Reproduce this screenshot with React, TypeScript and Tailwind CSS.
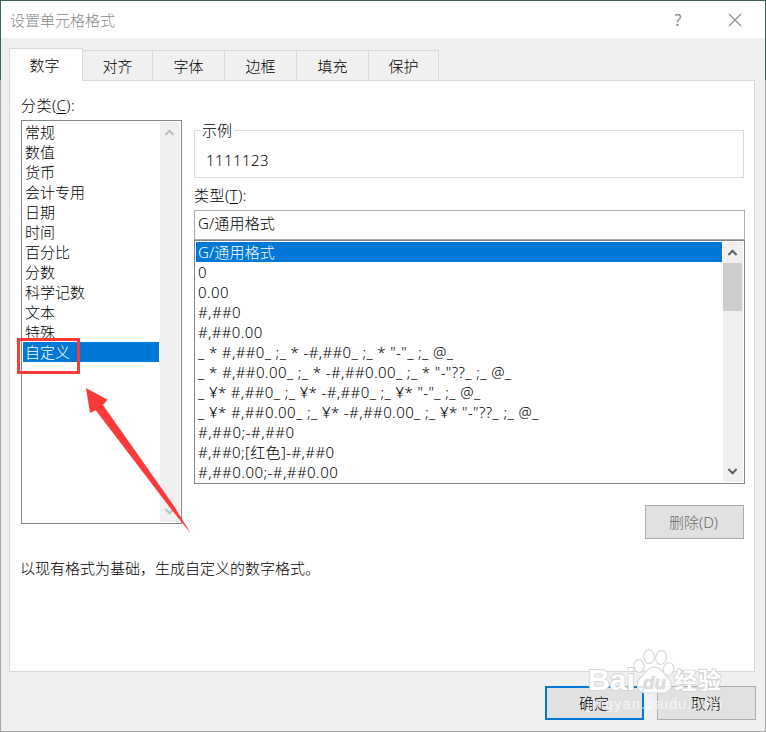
import clsx from "clsx";

const tabs = [
    { label: "数字", box: "w-[74px]" },
    { label: "对齐", box: "w-[70px]" },
    { label: "字体", box: "w-[72px]" },
    { label: "边框", box: "w-[72px]" },
    { label: "填充", box: "w-[72px]" },
    { label: "保护", box: "w-[70px]" },
];

const categories = ["常规", "数值", "货币", "会计专用", "日期", "时间", "百分比", "分数", "科学记数", "文本", "特殊", "自定义"];

const formats = [
    { text: "G/通用格式", tracking: "tracking-[0.15px]" },
    { text: "0", tracking: "tracking-normal" },
    { text: "0.00", tracking: "tracking-[0.4px]" },
    { text: "#,##0", tracking: "tracking-[0.4px]" },
    { text: "#,##0.00", tracking: "tracking-[0.35px]" },
    { text: '_ * #,##0_ ;_ * -#,##0_ ;_ * "-"_ ;_ @_', tracking: "tracking-[0.37px]" },
    { text: '_ * #,##0.00_ ;_ * -#,##0.00_ ;_ * "-"??_ ;_ @_', tracking: "tracking-[0.39px]" },
    { text: '_ ¥* #,##0_ ;_ ¥* -#,##0_ ;_ ¥* "-"_ ;_ @_', tracking: "tracking-[0.38px]" },
    { text: '_ ¥* #,##0.00_ ;_ ¥* -#,##0.00_ ;_ ¥* "-"??_ ;_ @_', tracking: "tracking-[0.4px]" },
    { text: "#,##0;-#,##0", tracking: "tracking-[0.5px]" },
    { text: "#,##0;[红色]-#,##0", tracking: "tracking-[0.39px]" },
    { text: "#,##0.00;-#,##0.00", tracking: "tracking-[0.45px]" },
];

function Chevron({ down = false, className }: { down?: boolean; className?: string }) {
    return (
        <svg width="10" height="7" viewBox="0 0 10 7" fill="none" strokeWidth="2" className={className}>
            <path d={down ? "M0.4 1 L4.5 5.2 L8.6 1" : "M0.4 6 L4.5 1.8 L8.6 6"} stroke="currentColor" />
        </svg>
    );
}

function TitleBar() {
    return (
        <div className="flex h-[37px] items-center bg-white pl-[9px] pr-[23px] text-[#8a8a8a]">
            <div className="grow">设置单元格格式</div>
            <div className="w-[10px] text-center text-[16px] font-normal">?</div>
            <svg width="14" height="14" viewBox="0 0 14 14" className="ml-[45px]">
                <path d="M1 1 L13 13 M13 1 L1 13" stroke="#8c8c8c" strokeWidth="1.1" />
            </svg>
        </div>
    );
}

function CategoryList() {
    return (
        <div className="flex h-[404px] w-[161px] border border-[#828790] p-px">
            <ul className="w-[136px]">
                {categories.map(c => (
                    <li key={c} className={clsx("h-5 pl-[2px] leading-5", c === "自定义" && "bg-[#0078d7] text-white")}>{c}</li>
                ))}
            </ul>
            <div className="ml-px flex w-5 flex-col items-center justify-between bg-[#f0f0f0] py-[7px] text-[#bfbfbf]">
                <Chevron />
                <Chevron down />
            </div>
        </div>
    );
}

function FormatList() {
    return (
        <div className="flex h-[244px] w-[551px] border border-[#828790] p-px">
            <ul className="w-[526px] overflow-hidden">
                {formats.map((f, i) => (
                    <li key={f.text} className={clsx("h-5 whitespace-pre pl-[2px] leading-5", f.tracking, i === 0 && "bg-[#0078d7] text-white")}>
                        {f.text}
                    </li>
                ))}
            </ul>
            <div className="ml-px flex w-5 flex-col items-center bg-[#f0f0f0] pt-[7px] text-[#606060]">
                <Chevron />
                <div className="mt-[7px] h-12 w-[19px] self-start bg-[#cdcdcd]"></div>
                <Chevron down className="mb-[7px] mt-auto" />
            </div>
        </div>
    );
}

// paw logo with the site name, drawn over the buttons
function Watermark() {
    return (
        <div className="pointer-events-none absolute left-[586px] top-[646px] h-[70px] w-[140px]">
            <svg width="140" height="70" viewBox="0 0 140 70" className="overflow-visible">
                <g fill="#ffffff" fillOpacity="0.85" stroke="#d9d9d9" strokeWidth="1.2">
                    <ellipse cx="53" cy="20" rx="5" ry="6.5" transform="rotate(-12 53 20)" />
                    <ellipse cx="63" cy="10.7" rx="5.2" ry="7" />
                    <ellipse cx="75" cy="11.5" rx="5.4" ry="7" transform="rotate(12 75 11.5)" />
                    <ellipse cx="82.5" cy="23" rx="5.2" ry="6.5" transform="rotate(15 82.5 23)" />
                    <path d="M68 21 C75 21 77 27 81 31 C88 37 86 47 77 47 H60 C50 47 49 37 55 31 C60 27 61 21 68 21 Z" />
                </g>
                <g fontFamily="'Liberation Sans', sans-serif" fontWeight="700" stroke="#d5d5d5" strokeWidth="1.8" paintOrder="stroke" fill="#ffffff">
                    <text x="2" y="44" fontSize="30" textLength="47" lengthAdjust="spacingAndGlyphs">Bai</text>
                    <text x="57" y="43" fontSize="19" textLength="23" lengthAdjust="spacingAndGlyphs" fontStyle="italic" fill="#dcdcdc" strokeWidth="0.6">du</text>
                    <text x="88" y="43" fontSize="23" textLength="47" fontFamily="'Noto Sans CJK SC', sans-serif">经验</text>
                </g>
                <text x="1" y="63" fontSize="14" textLength="135" fontFamily="'Liberation Sans', sans-serif" fontWeight="400" fill="#ffffff" fillOpacity="0.7">jingyan.baidu.com</text>
            </svg>
        </div>
    );
}

export default function App() {
    return (
        <div className="relative h-[732px] w-[766px] overflow-hidden bg-[#a6a6a6] bg-[linear-gradient(#3c664f_0_80px,#a6a6a6_80px)] p-px font-['Noto_Sans','Noto_Sans_CJK_SC',sans-serif] text-[15px] font-light leading-5 text-black">
            <div className="flex h-full flex-col bg-[#f0f0f0]">
                <TitleBar />

                <div className="relative z-10 ml-2 mt-[10px] flex h-[33px] items-end">
                    {tabs.map((t, i) => (
                        <div
                            key={t.label}
                            className={clsx(
                                "flex items-center justify-center border-[#d9d9d9]",
                                t.box,
                                i === 0 ? "h-[33px] border-x border-t bg-white pr-[3px]" : "mb-px h-[30px] border-r border-t pt-px"
                            )}
                        >
                            {t.label}
                        </div>
                    ))}
                </div>

                <div className="-mt-px ml-2 h-[592px] w-[746px] border border-[#d9d9d9] bg-white pl-[11px] pt-[14px]">
                    <div className="flex">
                        <div className="w-[173px]">
                            <div className="mb-[5px] h-5 tracking-[0.45px]">分类(<u className="underline-offset-2">C</u>):</div>
                            <CategoryList />
                        </div>
                        <div className="w-[551px] pt-[25px]">
                            <div className="h-[58px]">
                                <fieldset className="h-[58px] w-[550px] border border-[#dcdcdc] pl-[11px]">
                                    <legend className="-ml-[6px] px-[2px] leading-5">示例</legend>
                                    <div className="mt-[10px] tracking-[0.42px]">1111123</div>
                                </fieldset>
                            </div>
                            <div className="mb-[5px] mt-[7px] h-5 tracking-[0.5px]">类型(<u className="underline-offset-2">T</u>):</div>
                            <div className="h-[30px] border border-[#abadb3] pl-[3px] pt-[2px] tracking-[0.15px]">G/通用格式</div>
                            <FormatList />
                            <button className="ml-[451px] mt-[21px] block h-[34px] w-[99px] border border-[#adadad] bg-[#e1e1e1] pr-[2px] text-[#6d6d6d]">删除(D)</button>
                        </div>
                    </div>
                    <div className="-ml-px mt-[19px]">以现有格式为基础，生成自定义的数字格式。</div>
                </div>

                <div className="ml-[544px] mt-[14px] flex gap-[13px]">
                    <button className="h-[34px] w-[99px] border-2 border-[#0078d7] bg-[#e1e1e1] pr-px">确定</button>
                    <button className="h-[34px] w-[99px] border border-[#adadad] bg-[#e1e1e1] pr-px">取消</button>
                </div>
            </div>

            <div className="absolute left-[17px] top-[338px] h-9 w-[63px] border-[3px] border-[#fc3a3a]"></div>
            <svg width="110" height="150" viewBox="84 386 110 150" className="absolute left-[84px] top-[386px]">
                <path d="M86 388 L107.7 399.7 L103 405 L174 506 L191 533.8 L171 509 L95.7 410.2 L90 413 Z" fill="#fc3a3a" />
            </svg>
            <Watermark />
        </div>
    );
}
